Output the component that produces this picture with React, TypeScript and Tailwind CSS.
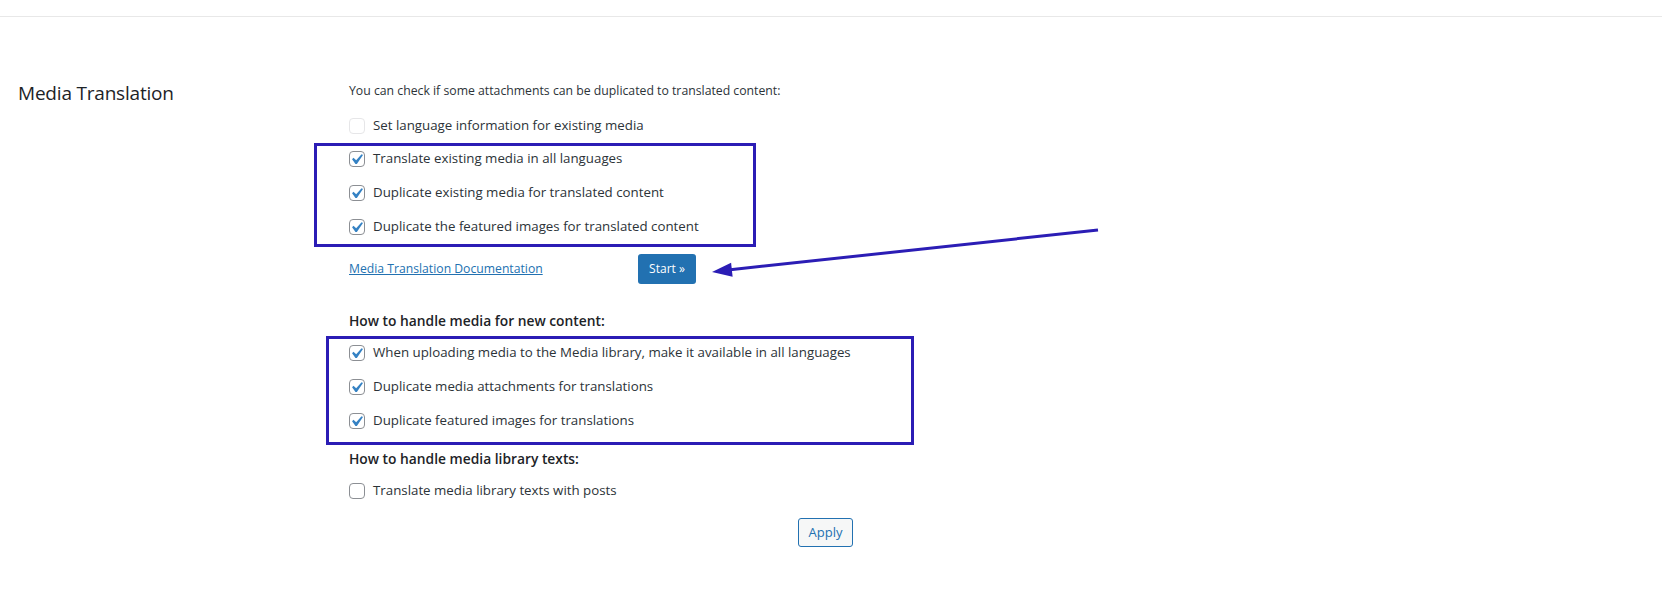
import React from 'react';

const FONT = '"Open Sans", "Noto Sans", Arial, sans-serif';

function CheckBox({ checked, disabled }: { checked?: boolean; disabled?: boolean }) {
  return (
    <span
      className={`relative block w-4 h-4 shrink-0 rounded-[4px] border bg-white ${
        disabled ? 'border-[#e6e6e8]' : 'border-[#8c8f94]'
      }`}
    >
      {checked && (
        <svg viewBox="0 0 20 20" className="absolute -left-[4px] -top-[3px] w-[21px] h-[21px]">
          <path d="M14.83 4.89l1.34.94-5.81 8.38H9.02L5.78 9.67l1.34-1.25 2.57 2.4z" fill="#3582c4" />
        </svg>
      )}
    </span>
  );
}

function Row({ label, checked, disabled }: { label: string; checked?: boolean; disabled?: boolean }) {
  return (
    <label className="h-[34px] flex items-center gap-[8px] text-[13.3px] text-[#2c3338]">
      <CheckBox checked={checked} disabled={disabled} />
      <span>{label}</span>
    </label>
  );
}

export default function App() {
  return (
    <div className="relative min-h-screen bg-white" style={{ fontFamily: FONT }}>
      <div className="h-[17px] border-b border-[#e8e8e8]" />

      <div className="flex pt-[64px]">
        {/* 左侧标题 */}
        <div className="w-[349px] shrink-0 pl-[18px]">
          <h2 className="text-[19px] leading-[24px] tracking-[-0.2px] text-[#1d2327]">Media Translation</h2>
        </div>

        {/* 右侧设置 */}
        <div className="flex flex-col">
          <p className="h-[20px] leading-[20px] text-[12.25px] text-[#2c3338]">
            You can check if some attachments can be duplicated to translated content:
          </p>

          <div className="mt-[8px]">
            <Row label="Set language information for existing media" disabled />
          </div>

          <div className="relative -mt-[1px]">
            <div className="absolute -left-[35px] top-[1px] w-[442px] h-[104px] border-[3px] border-[#2b1db5] pointer-events-none" />
            <Row label="Translate existing media in all languages" checked />
            <Row label="Duplicate existing media for translated content" checked />
            <Row label="Duplicate the featured images for translated content" checked />
          </div>

          <div className="mt-[10px] h-[30px] flex items-center">
            <a href="#" className="w-[289px] text-[12.2px] text-[#2271b1] underline">
              Media Translation Documentation
            </a>
            <button className="h-[30px] w-[58px] rounded-[3px] bg-[#2271b1] text-white text-[12px]">
              Start »
            </button>
          </div>

          <h3 className="mt-[27px] h-[20px] leading-[20px] text-[13.8px] font-semibold text-[#1d2327]">
            How to handle media for new content:
          </h3>

          <div className="relative mt-[5px]">
            <div className="absolute -left-[23px] top-0 w-[588px] h-[109px] border-[3px] border-[#2b1db5] pointer-events-none" />
            <Row label="When uploading media to the Media library, make it available in all languages" checked />
            <Row label="Duplicate media attachments for translations" checked />
            <Row label="Duplicate featured images for translations" checked />
          </div>

          <h3 className="mt-[11px] h-[20px] leading-[20px] text-[13.8px] font-semibold text-[#1d2327]">
            How to handle media library texts:
          </h3>

          <div className="mt-[5px]">
            <Row label="Translate media library texts with posts" />
          </div>

          <button className="mt-[10px] ml-[449px] h-[29px] w-[55px] rounded-[3px] border border-[#2271b1] bg-[#f6f7f7] text-[#2271b1] text-[13px]">
            Apply
          </button>
        </div>
      </div>

      {/* 箭头标注 */}
      <svg className="absolute left-0 top-0 pointer-events-none" width="1662" height="604">
        <line x1="1098" y1="230" x2="728" y2="270" stroke="#2b1db5" strokeWidth="3" />
        <polygon points="712,272 732.6,276.8 731.1,262.8" fill="#2b1db5" />
      </svg>
    </div>
  );
}
